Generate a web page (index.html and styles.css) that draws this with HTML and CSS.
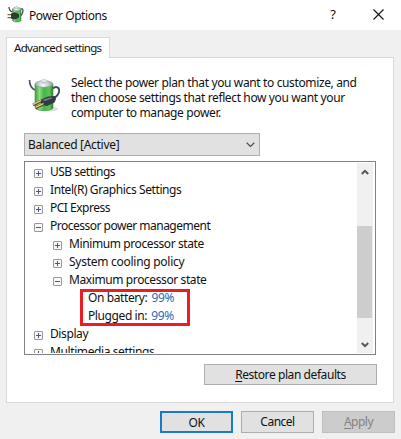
FILE: index.html
```
<!DOCTYPE html>
<html lang="en">
<head>
<meta charset="utf-8">
<title>Power Options</title>
<link rel="stylesheet" href="styles.css">
</head>
<body>
<svg class="defs" width="0" height="0" aria-hidden="true">
  <defs>
    <linearGradient id="green"><stop offset="0" stop-color="#3f9d42"/><stop offset=".25" stop-color="#8edb80"/><stop offset=".5" stop-color="#43b547"/><stop offset=".8" stop-color="#5cc853"/><stop offset="1" stop-color="#27852d"/></linearGradient>
    <linearGradient id="metal"><stop offset="0" stop-color="#9caaa9"/><stop offset=".45" stop-color="#f8fbfc"/><stop offset="1" stop-color="#929f9f"/></linearGradient>
  </defs>
</svg>
<header class="titlebar">
  <svg class="app-icon" viewBox="0 0 16 17">
    <path d="M1.500 1C1.500 3.500 2.500 5 5 6M13 3c3-1 3 2 1.500 5s-3 3-5 3" fill="none" stroke="#454b52" stroke-width="1.3"/>
    <path d="M5 3v11.500c1 2 7.500 2 8.500 0V3z" fill="url(#green)" stroke="#3b7d43" stroke-width=".5"/>
    <ellipse cx="9.2" cy="3" rx="4.3" ry="1.7" fill="url(#metal)" stroke="#8b9698" stroke-width=".5"/>
    <ellipse cx="9.2" cy="1.6" rx="2" ry="1" fill="#dfe6e8" stroke="#8b9698" stroke-width=".4"/>
    <path d="M0 8.700h4.500M0 11.700h4.500" stroke="#7c6a38" stroke-width="1.3"/>
    <path d="M3.500 7.500l4-1.300 4 2v3.300l-4 2-4-1z" fill="#30383a"/>
  </svg>
  <h1>Power Options</h1>
  <span class="help">?</span>
  <svg class="close" viewBox="0 0 11 11"><path d="M.5.5l10 10M10.500.5l-10 10" stroke="#111" stroke-width="1.1"/></svg>
</header>
<main>
  <div class="tab">Advanced settings</div>
  <section class="panel">
    <div class="intro">
      <svg class="battery" viewBox="0 0 32 34">
        <ellipse cx="20" cy="30" rx="10" ry="2.3" fill="#999" opacity=".35"/>
        <path d="M1.500 1C1.500 6 3 9 7 11" fill="none" stroke="#50536a" stroke-width="1.7"/>
        <path d="M7 5v24c1.500 3.500 16.500 3.500 18 0V5z" fill="url(#green)" stroke="#3a9544" stroke-width=".6"/>
        <ellipse cx="16" cy="5" rx="9" ry="3.300" fill="url(#metal)" stroke="#879596" stroke-width=".7"/>
        <path d="M13 1.800v2c1 1.300 5 1.300 6 0v-2" fill="#c5cfd2"/>
        <ellipse cx="16" cy="1.900" rx="3" ry="1.300" fill="#edf2f4" stroke="#a2aeb2" stroke-width=".5"/>
        <path d="M25 9.500c3-3 7-1 6 3.500-.8 3-3 5-6 7" fill="none" stroke="#42465f" stroke-width="1.900"/>
        <path d="M11 21.500l9-4 7-.5 1 3-1.500 3.500-7.500 3.500-5-1z" fill="#343945"/>
        <path d="M14 21l8-2.500 3 .5-8 3z" fill="#777d86"/>
        <path d="M13 22l-8 4M15.500 25l-8 4" stroke="#6e5122" stroke-width="2.600"/>
        <path d="M13 21.500l-8 4M15.500 24.500l-8 4" stroke="#efd991" stroke-width="1.300"/>
      </svg>
      <p>Select the power plan that you want to customize, and<br>then choose settings that reflect how you want your<br>computer to manage power.</p>
    </div>
    <div class="select"><span>Balanced [Active]</span>
      <svg viewBox="0 0 9 6"><path d="M.7.8l3.800 3.700L8.300.8" fill="none" stroke="#4b4b4b" stroke-width="1.200"/></svg>
    </div>
    <div class="listbox">
      <ul class="tree">
        <li class="tight"><i class="box plus"></i><span>USB settings</span></li>
        <li><i class="box plus"></i><span>Intel(R) Graphics Settings</span></li>
        <li class="tight"><i class="box plus"></i><span>PCI Express</span></li>
        <li class="tight"><i class="box"></i><span>Processor power management</span></li>
        <li class="child"><i class="box plus"></i><span>Minimum processor state</span></li>
        <li class="child loose"><i class="box plus"></i><span>System cooling policy</span></li>
        <li class="child"><i class="box"></i><span>Maximum processor state</span></li>
        <li class="leaf"><span>On battery: <b>99%</b></span></li>
        <li class="leaf"><span>Plugged in: <b>99%</b></span></li>
        <li><i class="box plus"></i><span>Display</span></li>
        <li><i class="box plus"></i><span>Multimedia settings</span></li>
      </ul>
      <div class="scrollbar">
        <svg viewBox="0 0 8 6"><path d="M.8 5L4 1.800 7.200 5" fill="none" stroke="#555" stroke-width="2"/></svg>
        <div class="thumb"></div>
        <svg viewBox="0 0 8 6"><path d="M.8 1L4 4.200 7.200 1" fill="none" stroke="#555" stroke-width="2"/></svg>
      </div>
      <div class="highlight"></div>
    </div>
    <button class="restore"><span><u>R</u>estore plan defaults</span></button>
  </section>
  <footer>
    <button class="ok">OK</button>
    <button class="cancel">Cancel</button>
    <button class="apply"><span><u>A</u>pply</span></button>
  </footer>
</main>
</body>
</html>
```
FILE: styles.css
```
* { box-sizing: border-box; }
body { margin: 0; width: 401px; height: 439px; overflow: hidden; background: #f0f0f0; color: #111; font: 12px/15px "Noto Sans", sans-serif; }
.defs { position: absolute; }
svg { display: block; flex: none; }
.titlebar { height: 30px; background: #fff; display: flex; align-items: center; padding: 0 17px 0 7px; }
.app-icon { width: 17px; height: 17px; margin: -2px 5px 0 0; }
h1 { margin: 0; font-size: 12px; font-weight: 400; white-space: nowrap; flex: 1; letter-spacing: -.4px; }
.help { margin: -2px 37px 0 0; font-size: 13px; }
.close { width: 11px; height: 11px; margin-top: -2px; }
main { padding: 7px 7px 0 6px; }
.tab { position: relative; z-index: 1; width: 104px; height: 21px; margin-bottom: -1px; padding: 2px 0 0 7px; background: #fff; border: 1px solid #d9d9d9; border-bottom: 0; white-space: nowrap; font-size: 11.5px; letter-spacing: -.67px; }
.panel { width: 388px; height: 346px; background: #fff; border: 1px solid #d9d9d9; padding: 17px 16px 0 17px; }
.intro { display: flex; height: 58px; }
.battery { width: 32px; height: 34px; margin: 4px 0 0 4px; }
.intro p { margin: 0 0 0 11px; white-space: nowrap; letter-spacing: -.37px; }
.select { width: 236px; height: 23px; border: 1px solid #adadad; background: #e1e1e1; display: flex; align-items: center; justify-content: space-between; padding: 0 4px 0 3px; letter-spacing: -.3px; }
.select svg { width: 9px; height: 6px; }
.listbox { position: relative; width: 352px; height: 194px; margin-top: 5px; padding: 1px 2px 1px 9px; border: 1px solid #828282; display: flex; }
.tree { list-style: none; margin: 0; padding: 0; flex: 1; overflow: hidden; }
.tree li { height: 18px; display: flex; align-items: center; white-space: nowrap; letter-spacing: -.4px; }
.tree li > span { margin-top: -1px; }
.tree .tight { letter-spacing: -.5px; }
.tree .loose { letter-spacing: -.27px; }
.tree .child { padding-left: 19px; }
.tree .leaf { padding-left: 54px; }
.tree b { font-weight: 400; color: #2b6cba; margin-left: 1.5px; }
.box { flex: none; width: 9px; height: 9px; margin: 2px 7px 0 0; border: 1px solid #999; border-radius: 1px; background: linear-gradient(#44588f, #44588f) center / 5px 1px no-repeat, #f7f7f7; }
.box.plus { background: linear-gradient(#44588f, #44588f) center / 5px 1px no-repeat, linear-gradient(#44588f, #44588f) center / 1px 5px no-repeat, #f7f7f7; }
.scrollbar { width: 16px; background: #f0f0f0; display: flex; flex-direction: column; justify-content: space-between; padding: 6px 0 5px; }
.scrollbar svg { width: 8px; height: 6px; margin-left: 4px; }
.thumb { width: 15px; height: 92px; background: #cdcdcd; margin-top: 27px; margin-bottom: 0; }
.highlight { position: absolute; left: 55px; top: 127px; width: 110px; height: 37px; border: 3px solid #ed1c24; }
button { height: 22px; width: 73px; padding: 0 0 1px; border: 1px solid #adadad; border-radius: 0; background: #e1e1e1; color: #111; font: inherit; letter-spacing: -.5px; }
.restore { display: block; width: 173px; height: 21px; margin: 9px 0 0 180px; letter-spacing: -.42px; }
u { text-underline-offset: 2px; }
footer { display: flex; justify-content: flex-end; gap: 8px; padding-top: 8px; margin-right: -1px; }
.ok { border: 2px solid #1979ca; padding: 0; }
.apply { background: #ccc; border-color: #bfbfbf; color: #838383; }
```
